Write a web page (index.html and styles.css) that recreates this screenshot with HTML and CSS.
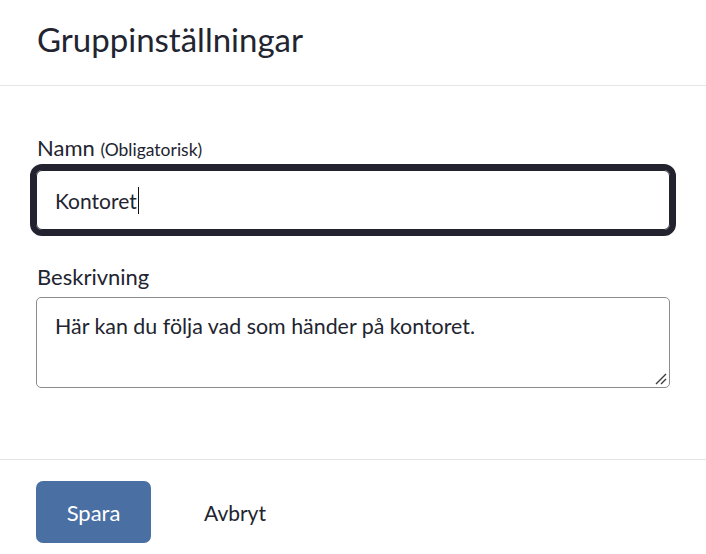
FILE: index.html
```html
<!DOCTYPE html>
<html lang="sv">
<head>
<meta charset="utf-8">
<title>Gruppinställningar</title>
<link rel="stylesheet" href="styles.css">
</head>
<body>
<div class="dialog">
  <header class="dialog-header">
    <h1 class="dialog-title">Gruppinställningar</h1>
  </header>
  <main class="dialog-body">
    <div class="field">
      <label class="field-label">Namn <span class="field-hint">(Obligatorisk)</span></label>
      <div class="text-input is-focused"><span class="value">Kontoret</span><span class="caret"></span></div>
    </div>
    <div class="field field-second">
      <label class="field-label">Beskrivning</label>
      <div class="text-area"><span class="value">Här kan du följa vad som händer på kontoret.</span>
        <svg class="resize" width="13" height="13" viewBox="0 0 13 13"><path d="M12 2 L2 12 M12 7 L7 12" stroke="#3c3c3c" stroke-width="1.4" fill="none"/></svg>
      </div>
    </div>
  </main>
  <footer class="dialog-footer">
    <button class="btn btn-primary">Spara</button>
    <button class="btn btn-link">Avbryt</button>
  </footer>
</div>
</body>
</html>
```
FILE: styles.css
```css
* { box-sizing: border-box; }
html, body { margin: 0; padding: 0; background: #fff; }
body {
  font-family: "Lato", "Noto Sans", sans-serif;
  color: #222430;
  width: 706px;
  height: 554px;
  overflow: hidden;
}
.dialog-header {
  height: 86px;
  border-bottom: 1px solid #e4e4e4;
  padding: 19px 37px 0;
}
.dialog-title {
  margin: 0;
  font-size: 33px;
  line-height: 40px;
  font-weight: 400;
}
.dialog-body {
  padding: 50px 36px 71px;
}
.field-label {
  display: block;
  font-size: 22px;
  line-height: 24px;
  padding-left: 1px;
  margin-bottom: 8px;
}
.field-hint { font-size: 17.5px; }
.field-second { margin-top: 35px; }
.field-second .field-label { margin-bottom: 8px; }
.text-input {
  height: 60px;
  border: 1px solid #22232e;
  border-radius: 6px;
  outline: 6px solid #22232e;
  outline-offset: 0;
  padding: 0 18px;
  display: flex;
  align-items: center;
  font-size: 21px;
}
.caret {
  display: inline-block;
  width: 1.5px;
  height: 27px;
  background: #111;
  margin-left: 1px;
}
.text-area {
  position: relative;
  height: 91px;
  border: 1px solid #8c8c8c;
  border-radius: 5px;
  padding: 16px 18px 15px;
  font-size: 21.4px;
  line-height: 24px;
}
.resize { position: absolute; right: 2px; bottom: 2px; }
.dialog-footer {
  border-top: 1px solid #e4e4e4;
  padding: 21px 36px;
  display: flex;
  align-items: center;
  gap: 30px;
}
.btn {
  font-family: inherit;
  font-size: 21px;
  border: none;
  cursor: pointer;
}
.btn-primary {
  width: 115px;
  height: 62px;
  border-radius: 7px;
  background: #4a6fa3;
  color: #fff;
  font-size: 22px;
}
.btn-link {
  background: none;
  color: #222430;
  padding: 0 23px;
}
```
